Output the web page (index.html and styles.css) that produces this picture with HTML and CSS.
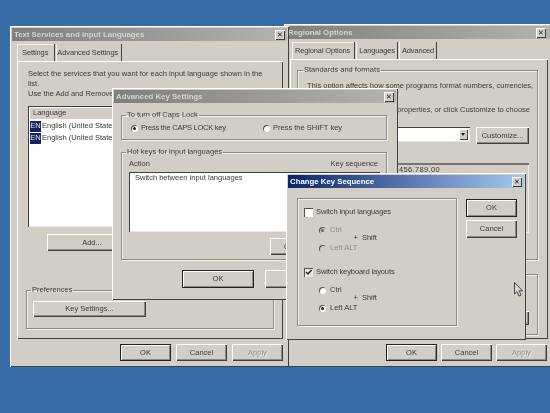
FILE: index.html
```html
<!DOCTYPE html>
<html lang="en">
<head>
<meta charset="utf-8">
<title>Change Key Sequence</title>
<link rel="stylesheet" href="styles.css">
</head>
<body>
<main class="desktop">

  <section class="win win-regional">
    <header class="title title-off"><span>Regional Options</span><b class="close">✕</b></header>
    <nav class="tabs">
      <span class="tab tab-on">Regional Options</span><span class="tab">Languages</span><span class="tab">Advanced</span>
    </nav>
    <div class="panel panel-regional">
      <fieldset class="group group-standards">
        <legend>Standards and formats</legend>
        <p class="copy">This option affects how some programs format numbers, currencies,</p>
        <p class="copy copy-gap copy-gap-wide">Select an item to match its properties, or click Customize to choose</p>
        <div class="locale-row">
          <div class="select"><span class="select-arrow"></span></div>
          <span class="btn btn-customize">Customize...</span>
        </div>
        <div class="samples">123.456.789.00</div>
      </fieldset>
      <fieldset class="group group-location">
        <legend></legend>
        <span class="btn btn-location"></span>
      </fieldset>
    </div>
    <footer class="actions actions-regional">
      <span class="btn btn-default">OK</span><span class="btn">Cancel</span><span class="btn btn-off">Apply</span>
    </footer>
  </section>

  <section class="win win-text">
    <header class="title title-off"><span>Text Services and Input Languages</span><b class="close">✕</b></header>
    <nav class="tabs">
      <span class="tab tab-on">Settings</span><span class="tab">Advanced Settings</span>
    </nav>
    <div class="panel panel-text">
      <p class="copy">Select the services that you want for each input language shown in the<br>list.<br>Use the Add and Remove</p>
      <div class="list list-lang">
        <div class="list-head">Language</div>
        <div class="lang"><i class="en">EN</i>English (United States)</div>
        <div class="lang"><i class="en">EN</i>English (United States)</div>
      </div>
      <span class="btn btn-add">Add...</span>
      <fieldset class="group group-pref">
        <legend>Preferences</legend>
        <span class="btn btn-keys">Key Settings...</span>
      </fieldset>
    </div>
    <footer class="actions">
      <span class="btn btn-default">OK</span><span class="btn">Cancel</span><span class="btn btn-off">Apply</span>
    </footer>
  </section>

  <section class="win win-advanced">
    <header class="title title-off"><span>Advanced Key Settings</span><b class="close">✕</b></header>
    <fieldset class="group group-caps">
      <legend>To turn off Caps Lock</legend>
      <div class="caps-row">
        <label class="opt opt-caps"><i class="radio radio-on"></i><span class="caps-label">Press the CAPS LOCK key</span></label>
        <label class="opt"><i class="radio"></i>Press the SHIFT key</label>
      </div>
    </fieldset>
    <fieldset class="group group-hot">
      <legend>Hot keys for input languages</legend>
      <div class="hot-head"><span>Action</span><span>Key sequence</span></div>
      <div class="list list-hot">Switch between input languages</div>
      <div class="hot-change"><span class="btn btn-change">Change</span></div>
    </fieldset>
    <footer class="adv-actions">
      <span class="btn btn-default btn-wide">OK</span><span class="btn btn-wide">Cancel</span>
    </footer>
  </section>

  <section class="win win-sequence">
    <header class="title title-on"><span>Change Key Sequence</span><b class="close">✕</b></header>
    <div class="seq-body">
      <div class="group-plain">
        <label class="check-row"><i class="check"></i>Switch input languages</label>
        <div class="keys keys-off">
          <div class="key-radios">
            <label class="opt"><i class="radio radio-on"></i>Ctrl</label>
            <label class="opt"><i class="radio"></i>Left ALT</label>
          </div>
          <span class="plus">+ &nbsp;Shift</span>
        </div>
        <label class="check-row check-row-2"><i class="check check-on"><svg viewBox="0 0 9 9" width="9" height="9"><path d="M2 4l2 2 3.500-4" fill="none" stroke="#222" stroke-width="1.400"/></svg></i>Switch keyboard layouts</label>
        <div class="keys">
          <div class="key-radios">
            <label class="opt"><i class="radio"></i>Ctrl</label>
            <label class="opt"><i class="radio radio-on"></i>Left ALT</label>
          </div>
          <span class="plus">+ &nbsp;Shift</span>
        </div>
      </div>
      <div class="seq-actions">
        <span class="btn btn-default">OK</span>
        <span class="btn">Cancel</span>
      </div>
    </div>
  </section>

  <svg class="cursor" viewBox="0 0 9 15" width="9" height="15"><path d="M.5.5v11.500l2.600-2.400 1.900 4.400 2-.9-1.900-4.300h3.400z" fill="#d8d8d8" stroke="#222" stroke-width=".8"/></svg>
</main>
</body>
</html>
```
FILE: styles.css
```css
* { box-sizing: border-box; }
html, body { margin: 0; padding: 0; }
body {
  width: 550px;
  height: 413px;
  overflow: hidden;
  background: #376ca4;
}
.desktop {
  position: relative;
  width: 550px;
  height: 413px;
  overflow: hidden;
  background: #376ca4;
  font: 7.5px/10px "Liberation Sans", Arial, sans-serif;
  color: #3a3a38;
  filter: blur(.35px);
}

/* windows on the desktop */
.win {
  position: absolute;
  padding: 2px;
  background: #d2cec6;
  box-shadow: inset 1px 1px 0 #fff, inset -1px -1px 0 #404040;
}
.win-text { left: 10px; top: 26px; width: 279px; height: 341px; }
.win-regional { left: 284px; top: 24px; width: 272px; height: 343px; }
.win-advanced { left: 112px; top: 88px; width: 286px; height: 212px; }
.win-sequence { left: 286px; top: 173px; width: 240px; height: 167px; }

.title {
  display: flex;
  justify-content: space-between;
  align-items: center;
  height: 13px;
  padding: 0 2px;
  font-weight: bold;
  font-size: 7.8px;
  white-space: nowrap;
}
.title-off { background: linear-gradient(90deg, #7f7f7f, #b5b3ae); color: #d6d4cf; }
.title-on { background: linear-gradient(90deg, #0a246a, #a6caf0); color: #fff; }
.close {
  flex: none;
  width: 10px;
  height: 10px;
  font: bold 7px/10px "DejaVu Sans", sans-serif;
  text-align: center;
  color: #222;
  background: #d2cec6;
  box-shadow: inset 1px 1px 0 #fff, inset -1px -1px 0 #404040;
}
.win-regional .close { margin-right: 6px; }

/* tabs */
.tabs { display: flex; height: 17px; margin: 3px 0 0 5px; letter-spacing: -.1px; }
.tab {
  padding: 4px 3px 0 1px;
  white-space: nowrap;
  border-right: 1px solid #404040;
  box-shadow: inset 1px 0 0 #f2f0ea;
  margin-left: 1px;
}
.tab-on { margin-left: 0; padding: 4px 6px 0 5px; box-shadow: inset 1px 1px 0 #f2f0ea; }
.win-regional .tabs { margin: 3px 0 0 6px; letter-spacing: -.15px; }
.win-regional .tab { padding-left: 3px; padding-right: 2px; margin-left: 1px; }
.win-regional .tab-on { margin-left: 0; padding-left: 3px; padding-right: 4px; }

.panel {
  margin-left: 5px;
  box-shadow: inset 1px 1px 0 #fff, inset -1px -1px 0 #404040;
}
.panel-text { width: 266px; height: 278px; padding: 8px 10px 0 11px; }
.panel-regional { width: 258px; height: 280px; margin-left: 4px; padding: 6px 10px 0 7px; }

.copy { margin: 0; white-space: nowrap; }
.copy-gap { margin-top: 4px; }

/* group boxes */
.group {
  margin: 0;
  padding: 0;
  min-width: 0;
  border: 1px solid #8c8a85;
  box-shadow: 1px 1px 0 #f2f0ea, inset 1px 1px 0 #f2f0ea;
}
.group legend { margin-left: 4px; padding: 0 1px; height: 10px; }

/* buttons */
.btn {
  display: flex;
  align-items: center;
  justify-content: center;
  height: 17px;
  white-space: nowrap;
  background: #d2cec6;
  box-shadow: inset 1px 1px 0 #fff, inset -1px -1px 0 #404040, inset -2px -2px 0 #8c8a85;
}
.btn-default { box-shadow: inset 0 0 0 1px #222, inset 2px 2px 0 #fff, inset -2px -2px 0 #8c8a85; }
.btn-off { color: #8c8a85; text-shadow: 1px 1px 0 #f2f0ea; }

.actions { display: flex; gap: 5px; margin: 5px 0 0 108px; }
.actions .btn { width: 51px; }
.actions-regional { gap: 4px; margin-left: 100px; }

/* text services */
.list { background: #fff; box-shadow: inset 1px 1px 0 #404040, inset -1px -1px 0 #e8e6e0; }
.list-lang { width: 270px; height: 121px; margin-top: 7px; padding: 1px; }
.list-head { height: 12px; padding: 1px 4px; background: #d2cec6; box-shadow: inset 1px 1px 0 #fff; margin-bottom: 1px; }
.lang { display: flex; align-items: center; height: 12px; white-space: nowrap; padding-left: 1px; }
.en { width: 11px; height: 11px; margin-right: 1px; background: #13235f; color: #dfe3ef; font-style: normal; text-align: center; }
.btn-add { width: 90px; margin: 7px 0 0 19px; }
.group-pref { width: 248px; height: 44px; margin: 34px 0 0 -2px; }
.btn-keys { width: 113px; height: 16px; margin: 6px 0 0 6px; }

/* regional */
.group-standards { width: 241px; height: 195px; padding: 0 8px 0 9px; }
.group-standards legend { margin-left: -4px; }
.group-standards .copy { margin-top: 6px; }
.group-standards .copy-gap-wide { margin-top: 14px; }
.locale-row { display: flex; gap: 6px; margin-top: 12px; }
.select { display: flex; justify-content: flex-end; flex: 1; height: 15px; padding: 2px; background: #fff; box-shadow: inset 1px 1px 0 #404040, inset -1px -1px 0 #e8e6e0; }
.select-arrow { position: relative; width: 9px; height: 11px; background: #d2cec6; box-shadow: inset 1px 1px 0 #fff, inset -1px -1px 0 #404040; }
.select-arrow::after { content: ""; position: absolute; left: 2px; top: 4px; border: 2.500px solid transparent; border-top: 3px solid #222; border-bottom: 0; }
.btn-customize { width: 53px; flex: none; }
.samples { height: 70px; margin-top: 19px; padding: 2px 0 0 76px; letter-spacing: .35px; box-shadow: inset 0 2px 0 #77756f, inset -1px -1px 0 #f2f0ea; }
.group-location { width: 241px; height: 66px; margin-top: 9px; padding: 32px 8px 0; }
.btn-location { width: 100%; height: 14px; }

/* advanced key settings */
.group-caps { width: 266px; height: 30px; margin: 7px 0 0 7px; }
.caps-row { display: flex; padding: 3px 0 0 9px; }
.opt { display: flex; align-items: center; gap: 3px; white-space: nowrap; }
.opt-caps { width: 132px; }
.caps-label { letter-spacing: -.25px; }
.radio { position: relative; flex: none; width: 7px; height: 7px; border-radius: 50%; background: #fff; box-shadow: inset 1px 1px 0 #55534f; }
.radio-on::after { content: ""; position: absolute; left: 2px; top: 2px; width: 3px; height: 3px; border-radius: 50%; background: #222; }
.group-hot { width: 266px; height: 113px; margin: 7px 0 0 7px; }
.hot-head { display: flex; justify-content: space-between; padding: 2px 8px 0 7px; }
.list-hot { width: 251px; height: 60px; margin: 3px 0 0 7px; padding: 1px 6px; }
.hot-change { display: flex; justify-content: flex-end; padding: 6px 8px 0 0; }
.btn-change { justify-content: flex-start; width: 108px; padding-left: 14px; }
.adv-actions { display: flex; gap: 11px; margin: 10px 0 0 68px; }
.btn-wide { width: 72px; height: 18px; }

/* change key sequence */
.seq-body { display: flex; gap: 9px; padding: 10px 0 0 9px; }
.group-plain {
  flex: none;
  width: 160px;
  height: 128px;
  padding: 8px 6px 0;
  border: 1px solid #8c8a85;
  box-shadow: 1px 1px 0 #f2f0ea, inset 1px 1px 0 #f2f0ea;
}
.check-row { display: flex; align-items: center; gap: 3px; white-space: nowrap; height: 10px; letter-spacing: -.1px; }
.check-row-2 { margin-top: 14px; }
.check { flex: none; width: 9px; height: 9px; background: #fff; box-shadow: inset 1px 1px 0 #55534f; line-height: 0; }
.check-on { background: #e8e6e0; }
.keys { display: flex; align-items: center; margin: 8px 0 0 15px; }
.key-radios { display: flex; flex-direction: column; gap: 8px; }
.key-radios .opt { height: 10px; gap: 4px; }
.plus { margin: 0 0 2px -4px; white-space: nowrap; }
.keys-off { color: #8c8a85; }
.keys-off .plus { color: #3a3a38; }
.keys-off .radio { background: #d2cec6; }
.keys-off .radio-on::after { background: #666; }
.seq-actions { display: flex; flex-direction: column; gap: 3px; margin-top: 1px; }
.seq-actions .btn { width: 51px; height: 18px; }

.cursor { position: absolute; left: 514px; top: 282px; }
```
